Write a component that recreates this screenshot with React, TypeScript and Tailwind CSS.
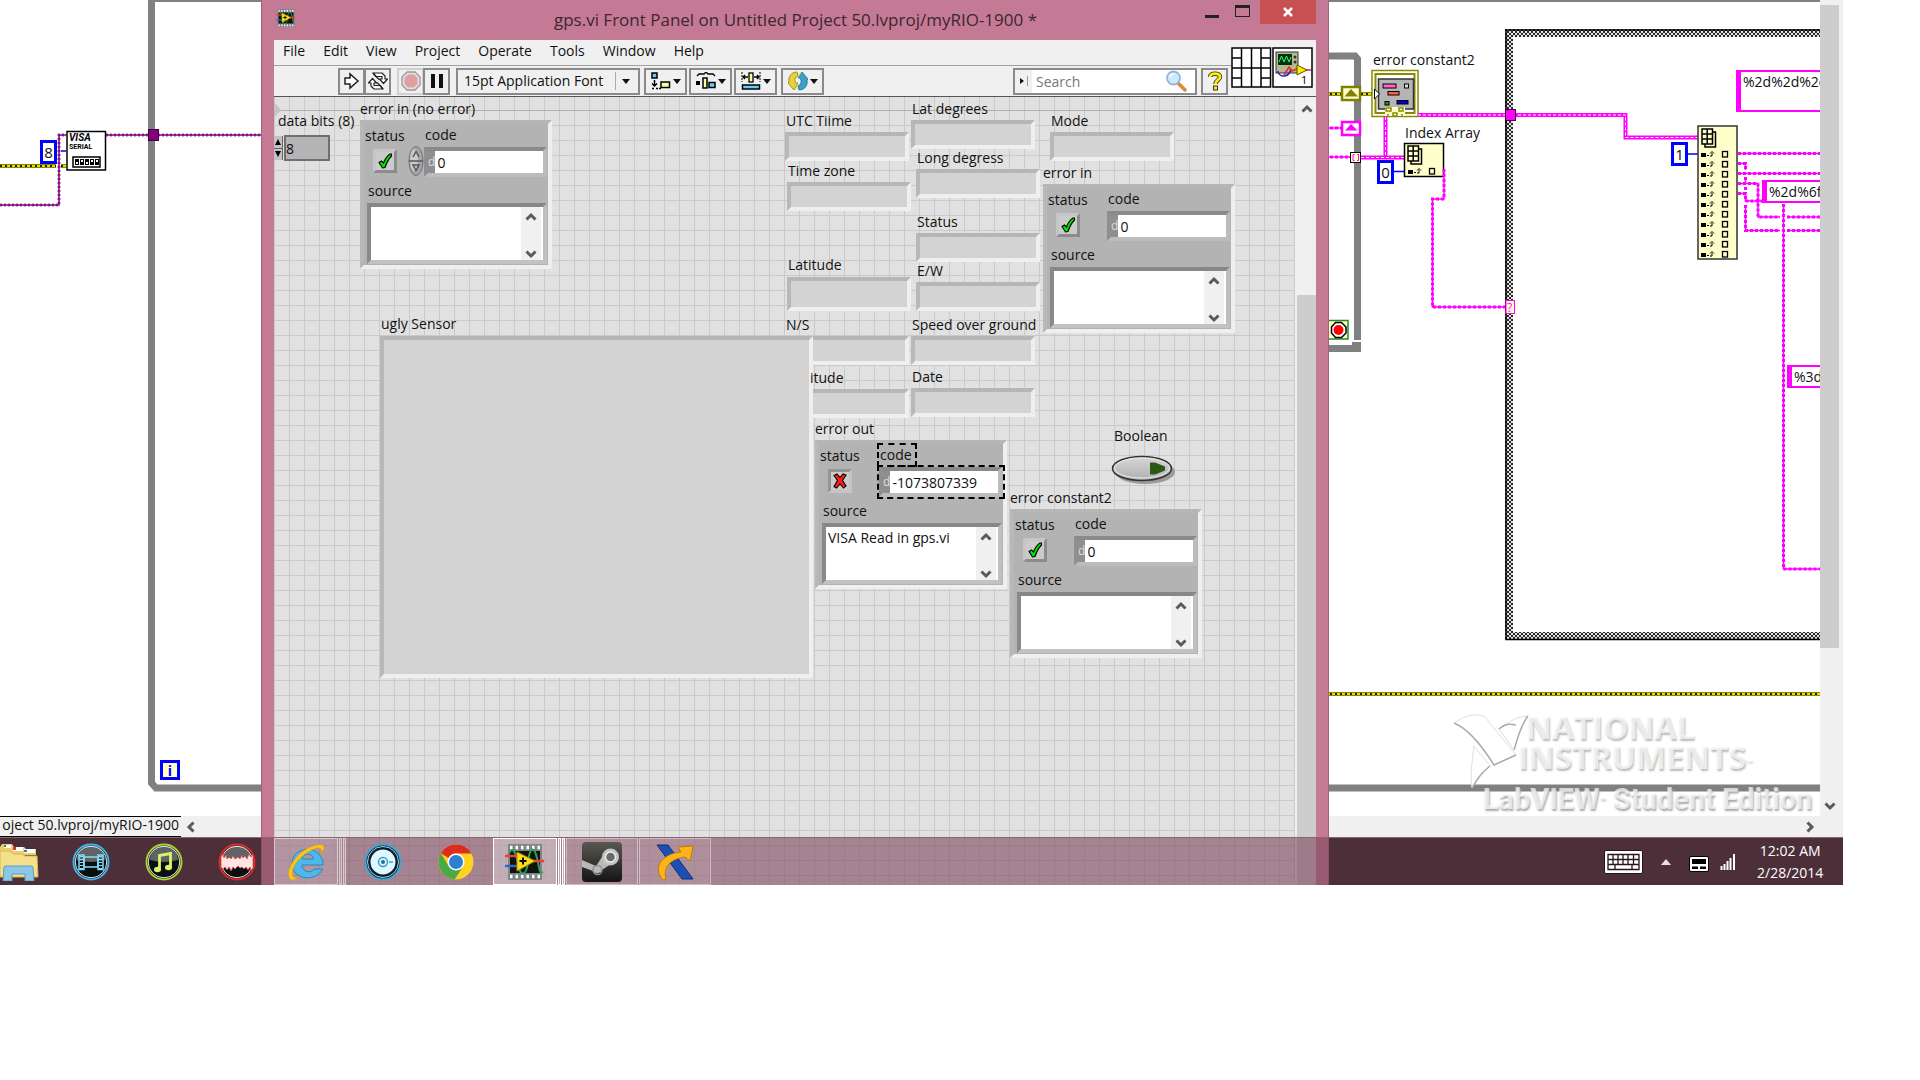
import { useId } from "react";
import type { ReactNode } from "react";

const menus = ["File", "Edit", "View", "Project", "Operate", "Tools", "Window", "Help"];

const indicators = [
  { label: "UTC Tiime", place: "left-[511px] top-[14px]", tall: false },
  { label: "Lat degrees", place: "left-[637px] top-[2px]", tall: false },
  { label: "Mode", place: "left-[776px] top-[14px]", tall: false },
  { label: "Time zone", place: "left-[513px] top-[64px]", tall: false },
  { label: "Long degress", place: "left-[642px] top-[51px]", tall: false },
  { label: "Status", place: "left-[642px] top-[115px]", tall: false },
  { label: "Latitude", place: "left-[513px] top-[158px]", tall: true },
  { label: "E/W", place: "left-[642px] top-[164px]", tall: false },
  { label: "N/S", place: "left-[511px] top-[218px]", tall: false },
  { label: "Speed over ground", place: "left-[637px] top-[218px]", tall: false },
  { label: "Date", place: "left-[637px] top-[270px]", tall: false },
];

const outputRows = [154, 164, 174, 184, 194, 204, 214, 224, 234, 244, 254];

const bevel =
  "border-4 border-t-[#b6b6b6] border-l-[#b8b8b8] border-r-[#efefef] border-b-[#efefef]";

const Chevron = ({ d, className = "" }: { d: string; className?: string }) => (
  <svg className={`size-3 ${className}`} viewBox="0 0 12 12" fill="none">
    <path d={d} stroke="#5a5a5a" strokeWidth="3" />
  </svg>
);

const UP = "M1.5 8.5 L6 4 L10.5 8.5";
const DOWN = "M1.5 3.5 L6 8 L10.5 3.5";
const LEFT = "M8.5 1.5 L4 6 L8.5 10.5";
const RIGHT = "M3.5 1.5 L8 6 L3.5 10.5";

const Caret = () => (
  <svg className="h-[5px] w-2" viewBox="0 0 8 5">
    <path d="M0 0H8L4 5Z" fill="#111" />
  </svg>
);

/* ---------- block diagram ---------- */

const StringWire = ({ d }: { d: string }) => (
  <g fill="none" stroke="#ff00ff">
    <path d={d} strokeWidth="1.5" />
    <path d={d} strokeWidth="3" strokeDasharray="3 2" />
  </g>
);

const ArrayWire = ({ d }: { d: string }) => (
  <g fill="none">
    <path d={d} stroke="#ff00ff" strokeWidth="4" />
    <path d={d} stroke="#fff" strokeWidth="1" strokeDasharray="3 2" />
  </g>
);

const ErrorWire = ({ d }: { d: string }) => (
  <g fill="none">
    <path d={d} stroke="#8a8a00" strokeWidth="4" />
    <path d={d} stroke="#e0e000" strokeWidth="2" />
    <path d={d} stroke="#222200" strokeWidth="2" strokeDasharray="2 3" />
  </g>
);

const GridGlyph = ({ x, y }: { x: number; y: number }) => (
  <g transform={`translate(${x} ${y})`} stroke="#000" strokeWidth="1.5">
    <rect x="3" y="3" width="10.5" height="15" fill="#ffffcc" />
    <rect x="0" y="0" width="10.5" height="15" fill="#ffffcc" />
    <path d="M0 5H10.5M0 10H10.5M5.2 0V15" fill="none" />
  </g>
);

const IndexRow = ({ x, y }: { x: number; y: number }) => (
  <g transform={`translate(${x} ${y})`}>
    <rect x="0" y="-1" width="5" height="4" fill="#000" />
    <rect x="6" y="1" width="2" height="1" fill="#000" />
    <path d="M9 2H11V-1M9 -0.5L11 -2.5L13 -0.5" stroke="#000" fill="none" />
    <rect x="21.5" y="-2.5" width="5" height="5.5" stroke="#000" strokeWidth="1.3" fill="none" />
  </g>
);

const Wiring = () => (
  <svg className="absolute inset-0 h-full w-full">
    <defs>
      <pattern id="caseBorder" width="4" height="4" patternUnits="userSpaceOnUse">
        <rect width="4" height="4" fill="#e4e4e4" />
        <path d="M0 0L4 4M4 0L0 4" stroke="#2a2a2a" strokeWidth="1" />
      </pattern>
    </defs>

    {/* outer while loop */}
    <path d="M2000 788H156L151.5 783V1H2000" fill="none" stroke="#808080" strokeWidth="7" />
    <rect x="155" y="2" width="1800" height="3" fill="#fff" />

    {/* serial setup */}
    <g fill="none" stroke="#800080">
      <path d="M0 205H59V135H66M106 135H270" strokeWidth="1.5" />
      <path d="M0 205H59V135H66M106 135H270" strokeWidth="3" strokeDasharray="2 2" opacity="0.7" />
    </g>
    <ErrorWire d="M0 166H56M61 166H66" />
    <path d="M61 151H66" stroke="#0000ff" strokeWidth="1.5" />
    <rect x="148.5" y="129.5" width="10" height="11" fill="#800080" stroke="#400040" />
    <rect x="67" y="131.5" width="38.5" height="38.5" fill="#fff" stroke="#000" strokeWidth="1.5" />
    <text x="69" y="141" fontSize="10" fontWeight="bold" fontStyle="italic" fontFamily="Roboto, sans-serif">VISA</text>
    <text x="69" y="149" fontSize="7" fontWeight="bold" fontFamily="Roboto, sans-serif">SERIAL</text>
    <rect x="73" y="157" width="27" height="10" fill="#fff" stroke="#000" strokeWidth="1.5" />
    <g fill="#000">
      <rect x="75" y="159" width="4" height="6" />
      <rect x="80" y="159" width="4" height="6" />
      <rect x="85" y="159" width="4" height="6" />
      <rect x="90" y="159" width="4" height="6" />
      <rect x="95" y="159" width="4" height="6" />
    </g>
    <g fill="#fff">
      <rect x="76" y="162" width="2" height="2" />
      <rect x="81" y="160" width="2" height="2" />
      <rect x="86" y="162" width="2" height="2" />
      <rect x="91" y="160" width="2" height="2" />
      <rect x="96" y="160" width="2" height="2" />
    </g>

    {/* inner loop */}
    <path d="M1320 56H1355L1357.5 59V340" fill="none" stroke="#808080" strokeWidth="7" />
    <path d="M1320 348.5H1361" stroke="#808080" strokeWidth="7" />
    <rect x="1352" y="342" width="9" height="4" fill="#808080" />
    <rect x="1326" y="320.5" width="22" height="18.5" fill="#ffffcc" stroke="#228b22" strokeWidth="1.5" />
    <path d="M1335.500 322.500H1341.500L1346 327V333L1341.500 337.500H1335.500L1331.500 333V327Z" fill="#fff" stroke="#000" strokeWidth="1.5" />
    <circle cx="1338.500" cy="330" r="5" fill="#ff0000" />

    {/* shift registers */}
    <ErrorWire d="M1320 94H1342M1361 94H1373" />
    <rect x="1342" y="87" width="18" height="13" fill="#ffffcc" stroke="#808000" strokeWidth="2.500" />
    <path d="M1344.500 96.500H1358L1351 89Z" fill="#808000" />
    <StringWire d="M1320 128H1342" />
    <rect x="1342" y="122" width="18" height="13" fill="#fff" stroke="#ff00ff" strokeWidth="2.500" />
    <path d="M1345 130.500H1357.500L1351 124Z" fill="#ff00ff" />
    <StringWire d="M1320 157H1350" />
    <ArrayWire d="M1361 157.500H1404" />
    <ArrayWire d="M1385.500 117V157" />
    <rect x="1350.500" y="152.500" width="10" height="10" fill="#ffffcc" stroke="#000" />
    <path d="M1354.500 154.500H1353V160.500H1354.500M1357 154.500H1358.500V160.500H1357" fill="none" stroke="#ff00ff" />

    {/* error cluster terminal */}
    <rect x="1372" y="70.500" width="46" height="46" fill="#fff" stroke="#8a8a00" strokeWidth="1.500" />
    <rect x="1375.500" y="74" width="39" height="39" fill="#fff" stroke="#8a8a00" strokeWidth="2" />
    <rect x="1378.500" y="79" width="35" height="30" fill="#b5b5b5" stroke="#333" strokeWidth="1.500" />
    <rect x="1383" y="84" width="13" height="4" fill="#ff66cc" stroke="#000" />
    <rect x="1404.500" y="84" width="4" height="4" fill="#ddd" stroke="#000" />
    <rect x="1388" y="91.500" width="11" height="3.500" fill="#ff6633" stroke="#000" />
    <rect x="1385" y="101.500" width="4" height="3.500" fill="#00aa00" stroke="#000" />
    <rect x="1397" y="100.500" width="11" height="3.500" fill="#0000dd" stroke="#000" />
    <path d="M1374.500 89V99L1379.500 94Z" fill="#fff" stroke="#000" />
    <rect x="1385" y="107" width="20" height="9" fill="#ffffcc" />
    <path d="M1386 108H1391V111H1386ZM1399 108H1403V111H1399ZM1393 113H1397V116H1393ZM1388 114V117M1402 114V117" stroke="#8a8a00" strokeWidth="1.500" fill="none" />

    {/* index array */}
    <path d="M1394 171.500H1404" stroke="#0000ff" strokeWidth="1.500" />
    <rect x="1404.500" y="143.500" width="39" height="33" fill="#ffffcc" stroke="#000" strokeWidth="1.500" />
    <GridGlyph x={1408} y={146} />
    <IndexRow x={1408} y={171} />
    <StringWire d="M1444 169V199H1432.500V307H1505" />

    {/* case structure */}
    <path d="M2000 33H1509V636H2000" fill="none" stroke="url(#caseBorder)" strokeWidth="8" />
    <path d="M2000 30H1506V639.500H2000" fill="none" stroke="#000" strokeWidth="1.500" />
    <ArrayWire d="M1418 115H1625.500V137.500H1698" />
    <rect x="1505.500" y="109.500" width="10" height="11" fill="#ff00ff" stroke="#400040" />
    <rect x="1506" y="300.500" width="8.500" height="13" fill="#ffffcc" stroke="#ff00ff" />
    <text x="1507" y="311.500" fontSize="12" fill="#ff00ff" fontFamily="Open Sans, sans-serif">?</text>

    <path d="M1687 154H1698" stroke="#0000ff" strokeWidth="1.500" />
    <StringWire d="M1738 153.500H2000" />
    <StringWire d="M1738 163.500H1745.500V170M1745.500 177V182M1745.500 187V190" />
    <StringWire d="M1738 173.500H2000" />
    <StringWire d="M1738 183.500H1758V217H1780M1787 217H2000" />
    <StringWire d="M1738 193.500H1745.500V201H1763M1745.500 205V230.500H1780M1787 230.500H2000" />
    <StringWire d="M1783.500 204V569H2000" />
    <rect x="1698" y="126" width="39" height="133" fill="#ffffcc" stroke="#333" strokeWidth="1.500" />
    <GridGlyph x={1702} y={129} />
    {outputRows.map((y) => (
      <IndexRow key={y} x={1701} y={y} />
    ))}

    <ErrorWire d="M1320 694H2000" />
  </svg>
);

const NumberConstant = ({ value, place }: { value: string; place: string }) => (
  <div
    className={`absolute flex h-6 w-[17px] items-center justify-center border-[3px] border-[#0000ff] bg-white text-[15px] ${place}`}>
    {value}
  </div>
);

const StringConstant = ({ value, place }: { value: string; place: string }) => (
  <div
    className={`absolute right-0 overflow-hidden border-y-2 border-l-[5px] border-[#ff00ff] bg-white pl-0.5 whitespace-nowrap leading-5 ${place}`}>
    {value}
  </div>
);

const Watermark = () => (
  <div className="absolute right-2 bottom-0 flex flex-col items-end font-['Open_Sans',sans-serif] font-bold text-white/70">
    <div className="flex">
      <svg className="-mr-3 h-[78px] w-[80px]" viewBox="0 0 80 78">
        <g stroke="#dedede" strokeWidth="1">
          <path d="M4 11C14 4 24 1 34 4L66 43L44 53Q22 18 4 11Z" fill="#fff" />
          <path d="M49 17C58 10 68 4 78 4C70 14 68 26 64 38Z" fill="#fff" />
          <path d="M24 34C22 50 20 64 22 76C28 66 32 60 40 54Z" fill="#fff" />
          <path d="M4 11Q22 18 44 53L66 43M49 17C55 11 60 12 66 13M78 4C70 14 68 26 64 38M22 76C28 66 32 60 40 54" fill="none" stroke="#aaa" strokeWidth="1.500" />
        </g>
      </svg>
      <div className="mr-[60px] text-[32px] leading-[30px] [text-shadow:1px_2px_2px_#bbb]">
        <p className="pl-2">NATIONAL</p>
        <p>
          INSTRUMENTS<sup className="text-[8px]">™</sup>
        </p>
      </div>
    </div>
    <p className="-mt-2 font-['Roboto',sans-serif] text-[29px] leading-[34px] [text-shadow:1px_2px_2px_#aaa]">
      LabVIEW<sup className="text-[10px]">™</sup> Student Edition
    </p>
  </div>
);

const BlockDiagram = () => (
  <section className="flex h-[837px] flex-col bg-white">
    <div className="flex min-h-0 flex-1">
      <div className="relative flex-1 overflow-hidden">
        <Wiring />
        <NumberConstant value="8" place="left-[40px] top-[140px]" />
        <NumberConstant value="0" place="left-[1377px] top-[160px]" />
        <NumberConstant value="1" place="left-[1671px] top-[142px]" />
        <div className="absolute top-[760px] left-[160px] flex h-5 w-5 items-center justify-center border-[3px] border-[#0000ff] bg-[#ffffcc] font-bold text-[#0000ff]">
          i
        </div>
        <span className="absolute top-[50px] left-[1373px] leading-5">error constant2</span>
        <span className="absolute top-[123px] left-[1405px] leading-5">Index Array</span>
        <StringConstant value="%2d%2d%2d" place="left-[1736px] top-[70px] h-[42px]" />
        <StringConstant value="%2d%6f" place="left-[1762px] top-[180px] h-[23px]" />
        <StringConstant value="%3d" place="left-[1787px] top-[365px] h-[23px]" />
        <Watermark />
      </div>
      <div className="flex w-[23px] flex-col items-start bg-[#f0f0f0]">
        <div className="mt-[5px] h-[643px] w-[19px] bg-[#cdcdcd]" />
        <button aria-label="Scroll down" className="mt-auto mb-1 ml-1">
          <Chevron d={DOWN} />
        </button>
      </div>
    </div>
    <div className="flex h-[21px] items-center bg-[#f0f0f0]">
      <div className="flex h-full w-[181px] items-start justify-end overflow-hidden border-y border-black pr-0.5 leading-4 whitespace-nowrap">
        oject 50.lvproj/myRIO-1900
      </div>
      <button aria-label="Scroll left" className="ml-1">
        <Chevron d={LEFT} />
      </button>
      <button aria-label="Scroll right" className="mr-[27px] ml-auto">
        <Chevron d={RIGHT} />
      </button>
    </div>
  </section>
);

/* ---------- front panel ---------- */

const Indicator = ({ label, place, tall }: { label: string; place: string; tall: boolean }) => {
  const id = useId();
  return (
    <div className={`absolute flex flex-col gap-px ${place}`}>
      <label htmlFor={id} className="h-5 pl-px whitespace-nowrap leading-5">
        {label}
      </label>
      <input
        id={id}
        readOnly
        className={`w-[124px] bg-[#d3d3d3] ${bevel} ${tall ? "mt-px h-[34px]" : "h-[29px]"}`}
      />
    </div>
  );
};

const StatusMark = ({ failed }: { failed: boolean }) => (
  <svg className="size-4" viewBox="0 0 16 16" stroke="#000" strokeWidth="1.100">
    {failed ? (
      <path
        d="M2 2.500L5 1L8 4.500L11 1L14 2L10.500 7.500L14 13L11.500 15L8 11L4.500 15L2 13.500L5.500 7.500Z"
        fill="#ff1a1a"
      />
    ) : (
      <path d="M2 9.500L4.500 8L6.500 10C8 6 10 3 13 1H14.500V3C11.500 6 9.500 10 8 14.500L5.500 15Z" fill="#00e800" />
    )}
  </svg>
);

type ErrorClusterProps = {
  title: string;
  place: string;
  code: string;
  source?: string;
  failed?: boolean;
  spinner?: boolean;
  selected?: boolean;
};

const ErrorCluster = ({
  title,
  place,
  code,
  source = "",
  failed = false,
  spinner = false,
  selected = false,
}: ErrorClusterProps) => {
  const id = useId();
  return (
    <fieldset className={`absolute w-[192px] ${place}`}>
      <legend className="h-[21px] whitespace-nowrap leading-5">{title}</legend>
      <div className={`h-[149px] bg-[#b3b3b3] ${bevel}`}>
        <div className="flex pt-[2px]">
          <div className="flex w-[60px] flex-col">
            <label htmlFor={`${id}status`} className="pl-px leading-5">
              status
            </label>
            <button
              id={`${id}status`}
              className={`mt-[3px] ml-[9px] flex size-6 items-center justify-center border-3 bg-[#cbcbcb] ${
                failed
                  ? "border-t-[#949494] border-r-[#c4c4c4] border-b-[#c4c4c4] border-l-[#949494]"
                  : "border-t-[#c6c6c6] border-r-[#8c8c8c] border-b-[#8c8c8c] border-l-[#c6c6c6]"
              }`}>
              <StatusMark failed={failed} />
            </button>
          </div>
          <div className="relative flex flex-col">
            <label htmlFor={`${id}code`} className="pl-px leading-[18px]">
              code
            </label>
            <div className="mt-[3px] flex h-[30px] w-[123px] items-stretch border-4 border-t-[#8a8a8a] border-r-[#bcbcbc] border-b-[#bcbcbc] border-l-[#8f8f8f]">
              <span className="flex w-2 items-center justify-center bg-[#8f8f8f] text-[12px] text-[#dedede]">
                d
              </span>
              <input
                id={`${id}code`}
                defaultValue={code}
                className="w-full min-w-0 bg-white pl-0.5 text-[14px] outline-none"
              />
            </div>
            {spinner && (
              <svg className="absolute top-[19px] -left-[16px] h-8 w-4" viewBox="0 0 16 32">
                <ellipse cx="8" cy="16" rx="7" ry="14.500" fill="#a4a4a9" stroke="#6f6f75" />
                <ellipse cx="6" cy="15" rx="4" ry="11" fill="#c9c9ce" />
                <path d="M1 16H15M5 12L8 6.500L11 12M5 20H11L8 25.500Z" fill="none" stroke="#55555b" strokeWidth="1.500" />
              </svg>
            )}
            {selected && (
              <>
                <div className="absolute -top-[3px] -left-0.5 h-6 w-10 border-2 border-dashed border-black" />
                <div className="absolute top-[19px] -left-0.5 h-[34px] w-[128px] border-2 border-dashed border-black" />
              </>
            )}
          </div>
        </div>
        <div className="flex flex-col pt-1 pl-[3px]">
          <label htmlFor={`${id}source`} className="pl-px leading-5">
            source
          </label>
          <div className="mt-[2px] flex h-[61px] w-[180px] border-4 border-t-[#878787] border-r-[#bfbfbf] border-b-[#c2c2c2] border-l-[#8a8a8a] bg-white">
            <textarea
              id={`${id}source`}
              defaultValue={source}
              className="min-w-0 flex-1 resize-none overflow-hidden px-0.5 pt-px text-[14px] leading-5 outline-none"
            />
            <div className="mr-0.5 flex w-5 flex-col items-center justify-between bg-[#f0f0f0] pt-1">
              <button aria-label="Scroll up">
                <Chevron d={UP} className="block" />
              </button>
              <button aria-label="Scroll down">
                <Chevron d={DOWN} className="block" />
              </button>
            </div>
          </div>
        </div>
      </div>
    </fieldset>
  );
};

const DataBits = () => (
  <div className="absolute top-[14px] left-0 flex flex-col">
    <label htmlFor="data-bits" className="pl-1 whitespace-nowrap leading-5">
      data bits (8)
    </label>
    <div className="mt-1 flex items-center">
      <svg className="h-6 w-[9px]" viewBox="0 0 9 24">
        <rect width="9" height="24" fill="#c2c2c2" />
        <path d="M8.500 0V24M0 12.500H9" stroke="#666" />
        <path d="M1 9H7L4 3ZM1 15H7L4 21Z" fill="#000" />
      </svg>
      <input
        id="data-bits"
        defaultValue="8"
        className="ml-px h-[26px] w-[46px] border-2 border-[#6f6f6f] bg-[#b4b4b4] text-[14px] outline-none"
      />
    </div>
  </div>
);

const BooleanSwitch = () => (
  <div className="absolute top-[329px] left-[834px] flex flex-col items-start">
    <label htmlFor="boolean-switch" className="pl-1.5 leading-5">
      Boolean
    </label>
    <button id="boolean-switch">
      <svg className="mt-2 h-[34px] w-[70px]" viewBox="0 0 70 34">
        <defs>
          <linearGradient id="switchFace" x1="0" y1="0" x2="0" y2="1">
            <stop offset="0" stopColor="#d8d8d8" />
            <stop offset="1" stopColor="#aeaeae" />
          </linearGradient>
        </defs>
        <ellipse cx="37" cy="18" rx="30" ry="12" fill="#9a9a9a" />
        <ellipse cx="34" cy="14.500" rx="29.500" ry="12" fill="url(#switchFace)" stroke="#333" strokeWidth="1.500" />
        <ellipse cx="34" cy="14" rx="27.500" ry="10" fill="none" stroke="#eaeaea" />
        <path d="M42 8.500H47L57 12.500V16.500L47 20.500H42Z" fill="#2c5a16" />
      </svg>
    </button>
  </div>
);

const PanelCanvas = () => (
  <div className="relative min-w-0 flex-1 overflow-hidden bg-[#e1e1e1] bg-[linear-gradient(to_right,#cacaca_1px,transparent_1px),linear-gradient(to_bottom,#cacaca_1px,transparent_1px)] bg-[size:15px_15px] bg-[position:0px_13px]">
    <div className="absolute top-[13px] h-px w-full bg-[#b0b0b0]" />
    <svg className="absolute top-[5px] left-0 h-4 w-2" viewBox="0 0 8 16">
      <path d="M0 0L7 8L0 16Z" fill="#c4c4c4" />
    </svg>

    <DataBits />
    {indicators.map((item) => (
      <Indicator key={item.label} {...item} />
    ))}
    <div className={`absolute top-[292px] left-[511px] h-[29px] w-[124px] bg-[#d3d3d3] ${bevel}`} />

    <div className="absolute top-[217px] left-[106px] flex flex-col">
      <span className="h-[22px] pl-px leading-5">ugly Sensor</span>
      <div className={`h-[342px] w-[433px] bg-[#d3d3d3] ${bevel}`} />
    </div>
    <span className="absolute top-[271px] left-[536px] leading-5">itude</span>

    <ErrorCluster title="error in (no error)" place="left-[86px] top-[2px]" code="0" spinner />
    <ErrorCluster title="error in" place="left-[769px] top-[66px]" code="0" />
    <ErrorCluster
      title="error out"
      place="left-[541px] top-[322px]"
      code="-1073807339"
      source="VISA Read in gps.vi"
      failed
      selected
    />
    <BooleanSwitch />
    <ErrorCluster title="error constant2" place="left-[736px] top-[391px]" code="0" />
  </div>
);

const ToolButton = ({
  label,
  className = "",
  children,
}: {
  label: string;
  className?: string;
  children: ReactNode;
}) => (
  <button
    aria-label={label}
    className={`flex h-[27px] items-center justify-center border-2 border-[#8a8a8a] bg-[#f0f0f0] ${className}`}>
    {children}
  </button>
);

const Toolbar = () => (
  <div className="flex h-[31px] items-center border-t border-[#a0a0a0] pl-16">
    <ToolButton label="Run" className="w-[27px]">
      <svg className="size-[18px]" viewBox="0 0 18 18">
        <path d="M2 6H7V2L15 9L7 16V12H2Z" fill="#fff" stroke="#222" strokeWidth="1.500" />
      </svg>
    </ToolButton>
    <ToolButton label="Run continuously" className="-ml-px w-[27px]">
      <svg className="size-5" viewBox="0 0 20 20">
        <g fill="#fff" stroke="#222" strokeWidth="1.200" strokeLinejoin="round">
          <path d="M5 2H14L17 5V8H19.500L15.500 12.500L11.500 8H14V5.500H8Z" />
          <path d="M15 18H6L3 15V12H0.500L4.500 7.500L8.500 12H6V14.500H12Z" />
          <path d="M5 2L8 5.500L11 8.500M15 18L12 14.500L9 11.500" fill="none" />
        </g>
      </svg>
    </ToolButton>
    <ToolButton label="Abort execution" className="ml-1.5 w-[27px] border-[#cfcfcf]">
      <svg className="size-5" viewBox="0 0 20 20">
        <path d="M6 1H14L19 6V14L14 19H6L1 14V6Z" fill="#e8dcdc" stroke="#999" strokeWidth="1.300" />
        <path d="M7 3.500H13L16.500 7V13L13 16.500H7L3.500 13V7Z" fill="#dfa0a3" />
      </svg>
    </ToolButton>
    <ToolButton label="Pause" className="-ml-px w-[27px]">
      <svg className="h-3.5 w-3" viewBox="0 0 12 14">
        <path d="M0 0H4V14H0ZM8 0H12V14H8Z" fill="#111" />
      </svg>
    </ToolButton>
    <div className="relative ml-1.5 flex h-[27px] w-[184px] items-center border-2 border-[#8a8a8a]">
      <select
        aria-label="Text settings"
        className="h-full w-full appearance-none pl-1.5 text-[14px] leading-5 outline-none">
        <option>15pt Application Font</option>
      </select>
      <span className="pointer-events-none absolute right-2 flex h-[18px] items-center border-l border-[#aaa] pl-1.5">
        <Caret />
      </span>
    </div>
    <ToolButton label="Align objects" className="ml-1 w-[43px] gap-0.5">
      <svg className="h-[18px] w-5" viewBox="0 0 20 18">
        <rect x="1" y="1" width="5" height="5" fill="#6cf" stroke="#000" strokeWidth="1.500" />
        <rect x="10" y="10" width="8.500" height="5.500" fill="#ffff99" stroke="#000" strokeWidth="1.500" />
        <path d="M3.500 8V14M1 11.500L3.500 14L6 11.500M1 16.500H3M5 16.500H7M8 16.500H10" stroke="#000" fill="none" strokeWidth="1.500" />
      </svg>
      <Caret />
    </ToolButton>
    <ToolButton label="Distribute objects" className="ml-0.5 w-[43px] gap-0.5">
      <svg className="h-[18px] w-5" viewBox="0 0 20 18">
        <path d="M1 4L3 2H8L10 0L12 2H17L19 4" stroke="#000" fill="none" strokeWidth="1.300" />
        <rect x="0" y="9" width="4" height="4" fill="#000" />
        <rect x="7" y="6" width="4" height="10" fill="#ffff99" stroke="#000" strokeWidth="1.500" />
        <rect x="13" y="10.500" width="6" height="5" fill="#6cf" stroke="#000" strokeWidth="1.500" />
      </svg>
      <Caret />
    </ToolButton>
    <ToolButton label="Resize objects" className="ml-0.5 w-[43px] gap-0.5">
      <svg className="h-[18px] w-5" viewBox="0 0 20 18">
        <path d="M1 0V10M19 0V10" stroke="#000" strokeDasharray="2 1" />
        <path d="M2 5H7M13 5H18M4 3L2 5L4 7M16 3L18 5L16 7" stroke="#000" fill="none" strokeWidth="1.300" />
        <rect x="8" y="1" width="4" height="9" fill="#ffff99" stroke="#000" strokeWidth="1.300" />
        <rect x="1.500" y="13" width="17" height="4" fill="#6cf" stroke="#000" strokeWidth="1.500" />
      </svg>
      <Caret />
    </ToolButton>
    <ToolButton label="Reorder" className="ml-1 w-[43px] gap-0.5">
      <svg className="size-5" viewBox="0 0 20 20">
        <path d="M9 1C3 1 0 6 1 11L0 12L6 19L10 12H8C6 9 7 6 10 5Z" fill="#e6d23c" stroke="#8a7a10" strokeWidth="0.800" />
        <path d="M11 19C17 19 20 14 19 9L20 8L14 1L10 7H12C14 10 13 14 10 15Z" fill="#3aa0c8" stroke="#1c6c90" strokeWidth="0.800" />
        <path d="M10 12L6 19L10 17ZM10 7L14 1L11 2Z" fill="#e6d23c" opacity="0.600" />
      </svg>
      <Caret />
    </ToolButton>
    <div className="ml-auto flex h-[27px] w-[184px] items-center border-2 border-[#8a8a8a] bg-white">
      <span className="flex h-full w-[17px] items-center justify-center bg-[#f0f0f0]">
        <svg className="h-2.5 w-2.5" viewBox="0 0 10 10">
          <path d="M1 2L5 5L1 8Z" fill="#111" />
          <path d="M8.500 0V10" stroke="#999" />
        </svg>
      </span>
      <input
        aria-label="Search"
        placeholder="Search"
        className="min-w-0 flex-1 pl-1 text-[14px] outline-none placeholder:text-[#777]"
      />
      <svg className="mr-2 size-[22px]" viewBox="0 0 22 22">
        <path d="M13 13L20 20" stroke="#d98a3c" strokeWidth="3.500" strokeLinecap="round" />
        <circle cx="8.500" cy="8" r="6.500" fill="#cfe9fb" stroke="#8fb9dc" strokeWidth="1.800" />
        <path d="M5 7C5.500 5 7 4 9 4" stroke="#fff" strokeWidth="1.500" fill="none" />
      </svg>
    </div>
    <ToolButton label="Help" className="mr-[3px] ml-1 w-[27px]">
      <svg className="h-5 w-4" viewBox="0 0 16 20" fill="none">
        <path d="M3 6C3 1.500 13 1.500 13 6C13 9 8.500 9 8.500 13" stroke="#333" strokeWidth="4.500" />
        <path d="M3 6C3 1.500 13 1.500 13 6C13 9 8.500 9 8.500 13" stroke="#ffee00" strokeWidth="2.800" />
        <rect x="6.500" y="15" width="4" height="4" fill="#ffee00" stroke="#333" />
      </svg>
    </ToolButton>
  </div>
);

const LabviewIcon = ({ className }: { className: string }) => (
  <svg className={className} viewBox="0 0 40 36">
    <rect x="3" y="0" width="34" height="36" fill="#7d8688" />
    <path d="M5 3.500H36M5 32.500H36" stroke="#fff" strokeWidth="3.500" strokeDasharray="2.500 3" />
    <rect x="5" y="7" width="30" height="22" fill="#10140f" />
    <path d="M3 12C7 0 11 8 13 20S21 34 23 18S29 2 32 14S34 30 38 28" fill="none" stroke="#2f9e5a" strokeWidth="2" />
    <path d="M0 12H12" stroke="#f03c3c" strokeWidth="2.500" />
    <path d="M0 22H12" stroke="#3366cc" strokeWidth="2.500" />
    <path d="M28 17H39" stroke="#f03c3c" strokeWidth="2.500" />
    <path d="M12 8L30 17L12 27Z" fill="#ffde17" stroke="#b08c00" />
    <path d="M18 13.500V20.500M14.500 17H21.500" stroke="#111" strokeWidth="2" />
  </svg>
);

const FrontPanelWindow = () => (
  <section className="absolute inset-y-0 left-[261px] z-10 flex w-[1068px] flex-col border-x border-[#a5607b] bg-[#c47a94] px-3">
    <header className="flex h-10 items-start">
      <LabviewIcon className="mt-[9px] h-[18px] w-6" />
      <h1 className="flex-1 pt-2 pl-[88px] text-center text-[17px] leading-6 text-[#3c2630]">
        gps.vi Front Panel on Untitled Project 50.lvproj/myRIO-1900 *
      </h1>
      <button aria-label="Minimize" className="mt-[15px] h-[3px] w-3.5 bg-[#222]" />
      <button aria-label="Maximize" className="mt-[5px] ml-4 h-3 w-[15px] border border-t-3 border-[#222]" />
      <button aria-label="Close" className="ml-2.5 flex h-6 w-14 items-center justify-center bg-[#c75050]">
        <svg className="size-2.5" viewBox="0 0 10 10">
          <path d="M1 1L9 9M9 1L1 9" stroke="#fff" strokeWidth="2.500" />
        </svg>
      </button>
    </header>
    <div className="flex min-h-0 flex-1 flex-col">
      <div className="flex border-b border-[#555] bg-[#f0f0f0]">
        <div className="flex flex-1 flex-col">
          <nav className="flex h-[25px] items-start gap-[18px] pt-px pl-[9px]">
            {menus.map((menu) => (
              <button key={menu} className="leading-5">
                {menu}
              </button>
            ))}
          </nav>
          <Toolbar />
        </div>
        <svg className="mt-[7px] mr-[3px] h-[42px] w-[82px]" viewBox="0 0 82 42">
          <g fill="#fff" stroke="#000" strokeWidth="1.500">
            <rect x="1" y="1" width="38.500" height="39" />
            <path d="M10.500 1V40M20.500 1V40M30 1V40M1 11H10.500M1 21H39.500M1 31H10.500M30 11H39.500M30 31H39.500" />
            <rect x="42" y="1" width="39" height="39" />
          </g>
          <rect x="45" y="5" width="22" height="21" fill="#b8b890" stroke="#333" />
          <rect x="47" y="7" width="14" height="11" fill="#031" />
          <path d="M48 15L50.500 9L53 15L55.500 9L58 15L60 10" stroke="#3f6" fill="none" />
          <circle cx="64" cy="10" r="1.500" fill="#333" />
          <circle cx="64" cy="15" r="1.500" fill="#333" />
          <path d="M47 24C48 31 58 31 60 22" stroke="#22c" strokeWidth="1.500" fill="none" />
          <path d="M53 28L58 20L61 24L68 21L72 23H80" stroke="#e22" strokeWidth="1.500" fill="none" />
          <path d="M66 18L76 23L66 28Z" fill="#ffe800" stroke="#550" />
          <text x="70" y="37" fontSize="11" fontFamily="Open Sans, sans-serif">1</text>
        </svg>
      </div>
      <div className="flex min-h-0 flex-1">
        <PanelCanvas />
        <div className="flex w-[21px] flex-col bg-[#f0f0f0] pl-0.5">
          <button aria-label="Scroll up" className="mt-1.5 flex justify-center">
            <Chevron d={UP} />
          </button>
          <div className="mt-[180px] flex-1 bg-[#cdcdcd]" />
        </div>
      </div>
    </div>
  </section>
);

/* ---------- taskbar ---------- */

const Orb = ({ ring, children }: { ring: string; children: ReactNode }) => (
  <svg className="size-[38px]" viewBox="0 0 38 38">
    <circle cx="19" cy="19" r="17.500" fill="#0c0f10" stroke={ring} strokeWidth="2" />
    <circle cx="19" cy="19" r="15.800" fill="none" stroke="#dfe6ea" strokeWidth="1" />
    <path d="M5 17A14 14 0 0 1 33 17Q19 21 5 17Z" fill="#fff" opacity="0.35" />
    {children}
  </svg>
);

const TaskButton = ({
  label,
  look = "",
  stacked = false,
  children,
}: {
  label: string;
  look?: string;
  stacked?: boolean;
  children: ReactNode;
}) => (
  <div className="flex h-full w-[73px] shrink-0 gap-px pl-px">
    <button aria-label={label} className={`flex flex-1 items-center justify-center ${look}`}>
      {children}
    </button>
    {stacked && (
      <>
        <span className={`w-[3px] ${look}`} />
        <span className={`w-[3px] ${look}`} />
      </>
    )}
  </div>
);

const Taskbar = () => (
  <footer className="relative z-20 flex h-12 items-center border-t border-[#8b6472] bg-[rgba(125,68,90,0.6)]">
    <div className="flex h-full w-[54px] items-center">
      <button aria-label="File Explorer">
        <svg className="h-[38px] w-[39px]" viewBox="0 0 39 38">
          <path d="M0 4L2 1H12L14 4H24L26 6H36V12H0Z" fill="#e9cf72" />
          <path d="M4 2H11V5H4ZM13 4H23V8H13ZM24 6H35V10H24Z" fill="#fff" />
          <path d="M4 2H6V4H4Z" fill="#2a8a3a" />
          <path d="M13 4H16V7H13Z" fill="#d33" />
          <path d="M24 7H27V9H24Z" fill="#27c" />
          <path d="M0 8H10L13 11H22L25 13H37L38 34H0Z" fill="#f3df8c" stroke="#d9b84e" />
          <path d="M3 38L4 24Q4 23 6 23H31Q33 23 33 25L34 38H25V31H12V38Z" fill="#8cc7e8" stroke="#5a9cc4" />
        </svg>
      </button>
    </div>
    <TaskButton label="Video">
      <Orb ring="#3fb4ea">
        <g fill="none" stroke="#7fe0ff" strokeWidth="1.500">
          <rect x="12" y="14" width="14" height="10" />
          <path d="M7 12H12V26.500H7ZM26 12H31V26.500H26Z" />
          <path d="M9.500 13V26M28.500 13V26" strokeWidth="3" strokeDasharray="1 2" />
        </g>
      </Orb>
    </TaskButton>
    <TaskButton label="Music">
      <Orb ring="#a6d22a">
        <path d="M14.500 26V12.500L25.500 10.500V24" fill="none" stroke="#d6f56a" strokeWidth="2.800" />
        <ellipse cx="12.500" cy="26.500" rx="3.500" ry="2.800" fill="#d6f56a" />
        <ellipse cx="23.500" cy="24.500" rx="3.500" ry="2.800" fill="#d6f56a" />
      </Orb>
    </TaskButton>
    <TaskButton label="Sound recorder">
      <Orb ring="#e02828">
        <path
          d="M3 14L5 11L6 15L8 12L9 16L11 14L13 16L15 13L17 16L20 14L22 16L24 12L25 15L27 13L29 16L31 11L33 14L35 12V25L33 27L32 24L30 27L28 24L26 26L24 24L22 25L20 23L17 26L15 24L13 28L11 24L9 27L7 24L5 26L3 24Z"
          fill="#ffe4e4"
          stroke="#e04848"
          strokeWidth="0.800"
        />
      </Orb>
    </TaskButton>
    <TaskButton label="Internet Explorer" look="border border-white/50 bg-white/15" stacked>
      <svg className="size-[38px]" viewBox="0 0 38 38">
        <path
          d="M36 22H15C15.500 29 24 31 27 26H35.500C30 39 5 38 5 20.500C5 2 36 1 36 22ZM15 16H26.500C26 9.500 15.500 9.500 15 16Z"
          fill="#4cb8ec"
          stroke="#2487c4"
          fillRule="evenodd"
        />
        <path d="M3 36C-3 28 10 6 30 2C39 0 38 6 34 11C36 5 32 4 27 6C13 12 3 25 6 33C7 36 10 35 13 33C9 37 5 38 3 36Z" fill="#f8c61e" stroke="#d79a0c" strokeWidth="0.600" />
      </svg>
    </TaskButton>
    <TaskButton label="Disc player">
      <svg className="size-[38px]" viewBox="0 0 38 38">
        <circle cx="19" cy="19" r="17.500" fill="#07202e" stroke="#38a8dc" strokeWidth="2" />
        <circle cx="19" cy="19" r="15.500" fill="none" stroke="#e6f7ff" strokeWidth="0.800" />
        <circle cx="19" cy="19" r="12.500" fill="#dff6ff" />
        <circle cx="19" cy="19" r="4.500" fill="none" stroke="#3d9cc4" strokeWidth="1.500" />
        <circle cx="19" cy="19" r="2" fill="#1b6f98" />
        <path d="M25 19H29" stroke="#6fb8d6" strokeWidth="2" />
      </svg>
    </TaskButton>
    <TaskButton label="Chrome">
      <svg className="size-[36px]" viewBox="0 0 36 36">
        <circle cx="18" cy="18" r="17.500" fill="#ffd21f" />
        <path d="M2.800 9.300A17.500 17.500 0 0 1 33.300 9.500L18 9.500A8.500 8.500 0 0 0 10.500 14Z" fill="#dd2c20" />
        <path d="M2.800 9.300A17.500 17.500 0 0 0 16.500 35.400L24.500 23.500Q18 29 11 22.500Z" fill="#4aa847" />
        <circle cx="18" cy="18" r="8.500" fill="#fff" />
        <circle cx="18" cy="18" r="7" fill="#2f7fd0" />
      </svg>
    </TaskButton>
    <TaskButton label="LabVIEW" look="border border-white bg-white/35" stacked>
      <LabviewIcon className="h-9 w-10" />
    </TaskButton>
    <TaskButton label="Steam" look="border border-white/40 bg-white/10">
      <svg className="size-10" viewBox="0 0 40 40">
        <defs>
          <linearGradient id="steamTile" x1="0" y1="0" x2="0" y2="1">
            <stop offset="0" stopColor="#5a5852" />
            <stop offset="1" stopColor="#141414" />
          </linearGradient>
        </defs>
        <rect width="40" height="40" rx="4" fill="url(#steamTile)" />
        <path d="M0 18L14 24L22 12L32 20L20 28A5 5 0 0 1 11 29L0 25Z" fill="#b9b9b9" />
        <circle cx="28.500" cy="15" r="8.500" fill="#c4c4c4" />
        <circle cx="28.500" cy="15" r="5" fill="#6a6a6a" stroke="#eee" strokeWidth="1.500" />
        <circle cx="15.500" cy="28" r="4.500" fill="none" stroke="#8c8c8c" strokeWidth="1.500" />
      </svg>
    </TaskButton>
    <TaskButton label="Xilinx" look="border border-white/40 bg-white/10">
      <svg className="size-[38px]" viewBox="0 0 38 38">
        <path d="M1 2H12L37 36H26Z" fill="#1c4fb4" stroke="#0d2f78" />
        <path d="M7 37C-4 24 6 11 25 9L22 4L37 3L34 18L29 14C17 15 6 23 10 36Z" fill="#fbb41a" stroke="#c47c00" />
      </svg>
    </TaskButton>

    <div className="ml-auto flex items-center text-white">
      <button aria-label="Touch keyboard">
        <svg className="h-6 w-[39px]" viewBox="0 0 39 24">
          <rect x="0.500" y="0.500" width="38" height="23" rx="1.500" fill="#fff" stroke="#2a151d" />
          <path
            d="M4 4.500H35V19.500H4ZM4 9.500H35M4 14.500H35M9 4.500V14.500M14 4.500V14.500M19 4.500V14.500M24 4.500V14.500M29.500 4.500V14.500M11 14.500V19.500M28 14.500V19.500"
            fill="none"
            stroke="#2a151d"
            strokeWidth="1.300"
          />
        </svg>
      </button>
      <button aria-label="Show hidden icons" className="ml-[18px]">
        <svg className="h-1.5 w-2.5" viewBox="0 0 10 6">
          <path d="M0 6H10L5 0Z" fill="#e8dfe6" />
        </svg>
      </button>
      <svg className="mt-1 ml-[18px] h-4 w-5" viewBox="0 0 20 16">
        <rect x="0.500" y="0.500" width="19" height="15" rx="1.500" fill="#fff" stroke="#000" />
        <path d="M3 3H17V8H3ZM3 10.500H9V13H3ZM11 10.500H17V13H11Z" fill="#000" />
      </svg>
      <svg className="ml-[11px] h-[17px] w-4" viewBox="0 0 16 17">
        <path d="M1.500 17V13M4.500 17V11M7.500 17V8M10.500 17V5M14 17V1" stroke="#fff" strokeWidth="2" />
      </svg>
      <div className="mr-[11px] ml-3 w-[84px] text-center text-[14px] leading-[22px]">
        <p>12:02 AM</p>
        <p>2/28/2014</p>
      </div>
    </div>
  </footer>
);

const App = () => (
  <div className="min-h-screen bg-white font-['Open_Sans','Noto_Sans',sans-serif] text-[14px] text-[#111]">
    <main className="relative flex w-[96%] flex-col overflow-hidden bg-[#050f0c]">
      <BlockDiagram />
      <FrontPanelWindow />
      <Taskbar />
    </main>
  </div>
);

export default App;
